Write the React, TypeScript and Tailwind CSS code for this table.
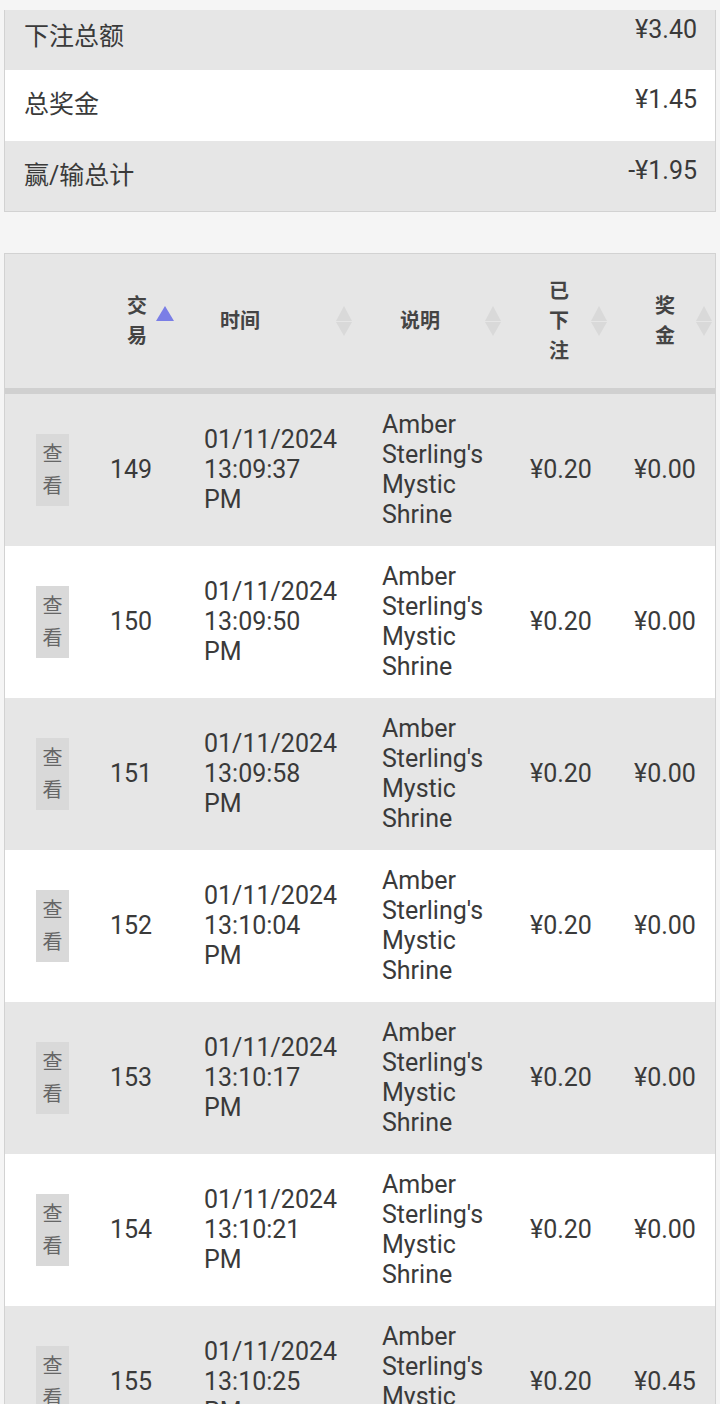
import React from "react";

const font = { fontFamily: 'Roboto, "Noto Sans CJK SC", sans-serif' };

const summary = [
  { label: "下注总额", value: "¥3.40" },
  { label: "总奖金", value: "¥1.45" },
  { label: "赢/输总计", value: "-¥1.95" },
];

const rows = [
  { id: 149, date: "01/11/2024", time: "13:09:37", bet: "¥0.20", win: "¥0.00" },
  { id: 150, date: "01/11/2024", time: "13:09:50", bet: "¥0.20", win: "¥0.00" },
  { id: 151, date: "01/11/2024", time: "13:09:58", bet: "¥0.20", win: "¥0.00" },
  { id: 152, date: "01/11/2024", time: "13:10:04", bet: "¥0.20", win: "¥0.00" },
  { id: 153, date: "01/11/2024", time: "13:10:17", bet: "¥0.20", win: "¥0.00" },
  { id: 154, date: "01/11/2024", time: "13:10:21", bet: "¥0.20", win: "¥0.00" },
  { id: 155, date: "01/11/2024", time: "13:10:25", bet: "¥0.20", win: "¥0.45" },
];

const cols = "grid grid-cols-[95px_94px_178px_148px_104px_91px]";

function SortIcon({ active }: { active?: boolean }) {
  if (active) {
    return (
      <svg width="18" height="30" viewBox="0 0 18 30" className="shrink-0">
        <polygon points="9,0 18,15 0,15" fill="#7a7ee6" />
      </svg>
    );
  }
  return (
    <svg width="16" height="30" viewBox="0 0 16 30" className="shrink-0">
      <polygon points="8,0 16,15 0,15" fill="#d9d9d9" />
      <polygon points="0,16 16,16 8,30" fill="#d9d9d9" />
    </svg>
  );
}

function Lines({ items }: { items: string[] }) {
  return (
    <div>
      {items.map((t, i) => (
        <span key={i} className="block">
          {t}
        </span>
      ))}
    </div>
  );
}

export default function App() {
  return (
    <div className="min-h-[1404px] bg-[#f5f5f5] pt-[10px]" style={font}>
      {/* summary */}
      <div className="mx-[4px] border-x border-b border-[#d2d2d2] text-[#3a3a3a]">
        {summary.map((s, i) => (
          <div
            key={s.label}
            className={`flex justify-between pl-[19px] pr-[18px] ${
              i === 0 ? "h-[60px]" : i === 1 ? "h-[71px]" : "h-[70px]"
            } ${i === 1 ? "bg-white" : "bg-[#e6e6e6]"}`}
          >
            <span className={`text-[25px] leading-[30px] ${i === 0 ? "pt-[12px]" : "pt-[20px]"}`}>{s.label}</span>
            <span className={`text-[25px] leading-[30px] ${i === 0 ? "pt-[5px]" : "pt-[15px]"}`}>{s.value}</span>
          </div>
        ))}
      </div>

      {/* table */}
      <div className="mx-[4px] mt-[41px] border-x border-t border-[#d2d2d2]">
        <div className={`${cols} h-[140px] bg-[#e6e6e6] border-b-[6px] border-[#d0d0d0] text-[20px] leading-[30px] font-bold text-[#444]`}>
          <div />
          <div className="flex items-center pl-[27px]">
            <div className="w-[20px]">
              <Lines items={["交", "易"]} />
            </div>
            <div className="ml-[9px] self-center">
              <SortIcon active />
            </div>
          </div>
          <div className="flex items-center pl-[26px]">
            <span className="w-[40px]">时间</span>
            <div className="ml-[76px]">
              <SortIcon />
            </div>
          </div>
          <div className="flex items-center pl-[28px]">
            <span className="w-[40px]">说明</span>
            <div className="ml-[45px]">
              <SortIcon />
            </div>
          </div>
          <div className="flex items-center pl-[29px]">
            <div className="w-[20px]">
              <Lines items={["已", "下", "注"]} />
            </div>
            <div className="ml-[22px]">
              <SortIcon />
            </div>
          </div>
          <div className="flex items-center pl-[31px]">
            <div className="w-[20px]">
              <Lines items={["奖", "金"]} />
            </div>
            <div className="ml-[21px]">
              <SortIcon />
            </div>
          </div>
        </div>

        {rows.map((r, i) => (
          <div
            key={r.id}
            className={`${cols} h-[152px] items-center text-[25px] leading-[30px] text-[#3a3a3a] ${
              i % 2 === 0 ? "bg-[#e6e6e6]" : "bg-white"
            }`}
          >
            <div className="flex justify-center">
              <span className="w-[33px] bg-[#d9d9d9] py-[4px] text-center text-[20px] leading-[32px] text-[#666]">
                查<br />看
              </span>
            </div>
            <div className="pl-[10px]">{r.id}</div>
            <div className="pl-[10px]">
              <Lines items={[r.date, r.time, "PM"]} />
            </div>
            <div className="pl-[10px]">
              <Lines items={["Amber", "Sterling's", "Mystic", "Shrine"]} />
            </div>
            <div className="pl-[10px]">{r.bet}</div>
            <div className="pl-[10px]">{r.win}</div>
          </div>
        ))}
      </div>
    </div>
  );
}
